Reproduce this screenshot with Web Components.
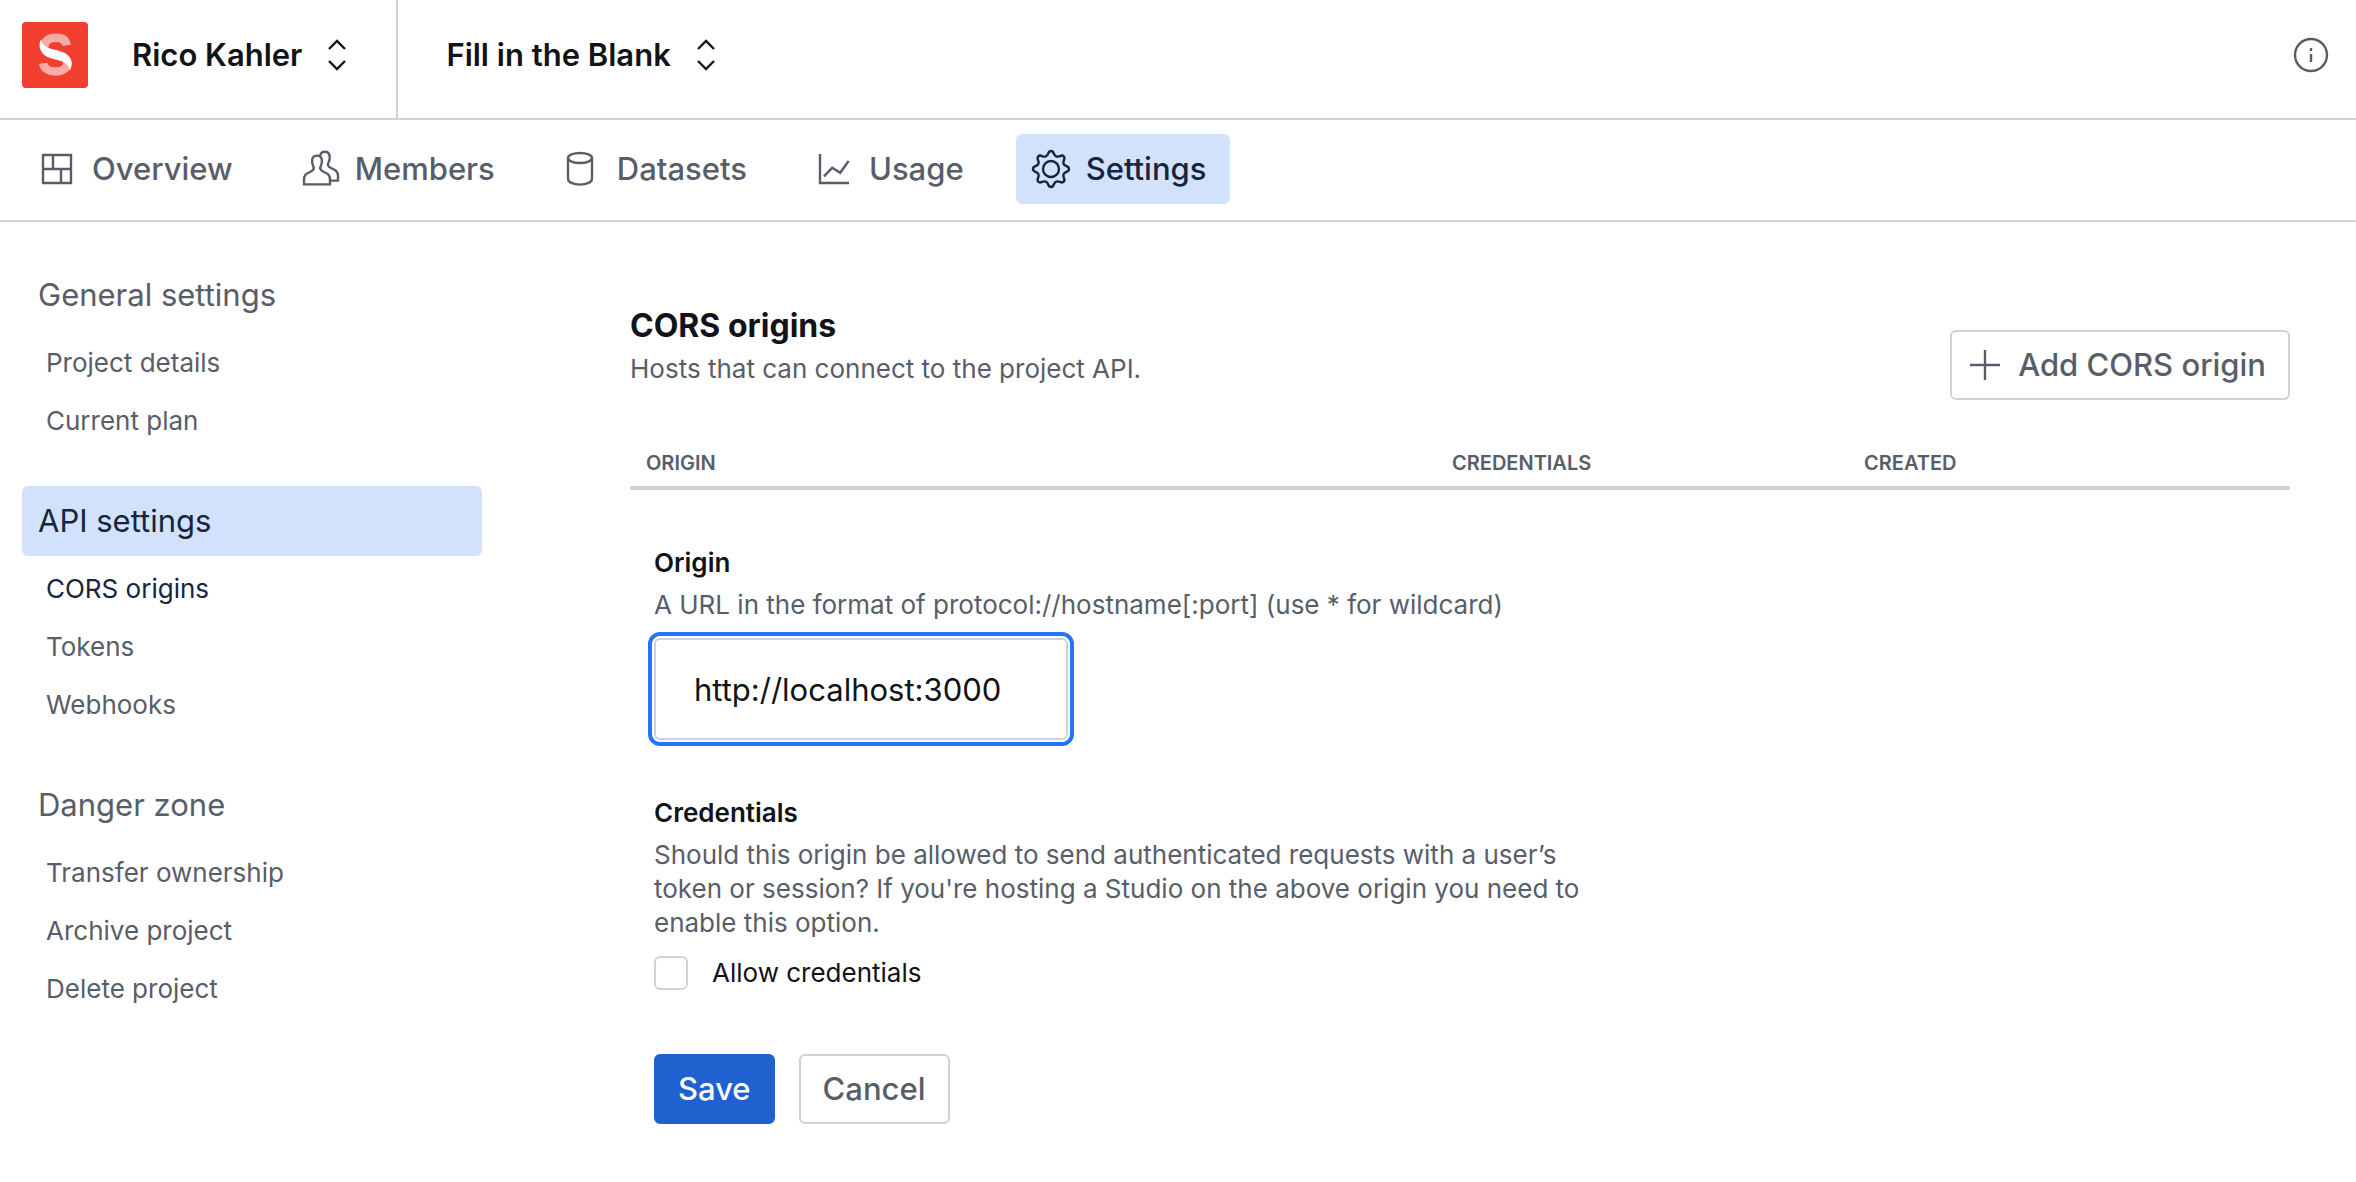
<!DOCTYPE html>
<html lang="en">
<head>
  <meta charset="utf-8">
  <meta name="viewport" content="width=device-width, initial-scale=1">
  <title>CORS origins - Fill in the Blank</title>
  <style>
    :root {
      --text-color: #121317;
      --muted-color: #575e69;
      --active-color: #15253f;
      --active-bg: #d3e2fc;
      --border-color: #ced3d9;
      --focus-color: #2276fc;
      --primary-color: #1f62cf;
      --brand-color: #f03e2f;
    }

    body {
      margin: 0;
      background-color: #fff;
      color: var(--text-color);
      font-family: Inter, "Liberation Sans", sans-serif;
      font-size: 31px;
      line-height: 40px;
    }
  </style>
</head>
<body>
  <settings-page></settings-page>

  <script>
    // wavy outline of the cog, one lobe every 45 degrees
    const cogPath = () => {
      const point = (angle, radius, shift) => {
        const x = 12.5 + radius * Math.cos(angle) - shift * Math.sin(angle)
        const y = 12.5 + radius * Math.sin(angle) + shift * Math.cos(angle)
        return `${x.toFixed(2)} ${y.toFixed(2)}`
      }
      let d = `M${point(0, 9, 0)}`

      for (let i = 1; i <= 16; i++) {
        const from = (i - 1) * Math.PI / 8
        const to = i * Math.PI / 8
        const [r1, r2] = i % 2 ? [9, 6.8] : [6.8, 9]
        d += `C${point(from, r1, 1.7)} ${point(to, r2, -1.7)} ${point(to, r2, 0)}`
      }
      return d + 'Z'
    }

    const icons = {
      select: '<path d="M8.5 9.5L12.5 5.5L16.5 9.5M8.5 15.5L12.5 19.5L16.5 15.5"/>',
      info: '<circle cx="12.5" cy="12.5" r="8"/><path d="M12.5 12V16M12.5 9V10.5"/>',
      dashboard: '<path d="M5.5 5.5H19.5V19.5H5.5ZM5.5 12.5H19.5M10.5 5.5V12.5M14.5 12.5V19.5"/>',
      users: '<g transform="translate(-1)"><path d="M5.5 20.2V18C5.5 15 7 14.8 8.8 13.9C10.2 13.2 10.8 12.6 10.2 11.3C9.5 10 9.4 9 9.6 7.8C9.8 6.5 10.8 5.8 12 5.8C13.2 5.8 14.2 6.5 14.4 7.8C14.6 9 14.5 10 13.8 11.3C13.2 12.6 13.8 13.2 15.2 13.9C17 14.8 18.5 15 18.5 18V20.2Z"/><path d="M13.5 6.1C13.8 4.6 14.7 3.9 15.9 3.9C17.1 3.9 18.1 4.6 18.3 5.9C18.5 7.2 18.4 8.2 17.7 9.4C17.1 10.6 17.6 11.3 19 12C21 13 22.5 13.5 22.5 16V18.3H18.6"/></g>',
      database: '<g transform="translate(-1)"><ellipse cx="12.5" cy="7" rx="6" ry="2.5"/><path d="M6.5 7V17.5C6.5 19 9 20.3 12.5 20.3C16 20.3 18.5 19 18.5 17.5V7"/></g>',
      chart: '<path d="M5.5 5V19.5H20M7.5 16.2L11.6 11.9L15.6 14.4L19.8 8.5"/>',
      cog: `<path d="${cogPath()}"/><circle cx="12.5" cy="12.5" r="4"/>`,
      add: '<path d="M12.5 5V20M5 12.5H20"/>'
    }

    class AppIcon extends HTMLElement {
      constructor() {
        super()

        this.attachShadow({ mode: 'open' })
      }

      connectedCallback() {
        this.shadowRoot.innerHTML = `
          <style>
            :host {
              display: block;
              flex: none;
              width: 50px;
              height: 50px;
            }

            svg {
              display: block;
              fill: none;
              stroke: currentColor;
              stroke-width: 1.2;
            }
          </style>
          <svg viewBox="0 0 25 25" width="50" height="50" aria-hidden="true">${icons[this.getAttribute('name')]}</svg>
        `
      }
    }

    class BrandLogo extends HTMLElement {
      constructor() {
        super()

        this.attachShadow({ mode: 'open' })

        this.shadowRoot.innerHTML = `
          <style>
            :host {
              display: block;
              flex: none;
            }

            a {
              display: block;
              width: 66px;
              height: 66px;
              border-radius: 4px;
              background-color: var(--brand-color);
            }
          </style>
          <a href="#" aria-label="Home">
            <svg viewBox="0 0 66 66" width="66" height="66" aria-hidden="true">
              <g fill="none" stroke="#f9aca5" stroke-width="8.5">
                <path d="M44.7 23.4C44 18 40 15.7 34 15.7C27 15.7 22.3 19 22.3 25"/>
                <path d="M21.3 41.2C22 47 27 49.5 33.5 49.5C41 49.5 45.5 46 45.5 40"/>
              </g>
              <path fill="#fff" d="M18.9 17.6C16 23 17.3 33 29 36.3C38 38.8 47 40 47.8 48.4C51.5 42 50.5 33 39 29.5C28 26.5 20.5 25.5 18.9 17.6Z"/>
            </svg>
          </a>
        `
      }
    }

    class ProjectSwitcher extends HTMLElement {
      constructor() {
        super()

        this.attachShadow({ mode: 'open' })

        this.shadowRoot.innerHTML = `
          <style>
            :host {
              display: block;
            }

            button {
              display: flex;
              align-items: center;
              gap: 10px;
              height: 66px;
              padding: 0 22px;
              border: none;
              background: none;
              color: inherit;
              font: inherit;
              font-weight: 600;
              white-space: nowrap;
              cursor: pointer;
            }
          </style>
          <button type="button"><slot></slot><app-icon name="select"></app-icon></button>
        `
      }
    }

    class PageHeader extends HTMLElement {
      constructor() {
        super()

        this.attachShadow({ mode: 'open' })

        this.shadowRoot.innerHTML = `
          <style>
            :host {
              display: block;
              border-bottom: 2px solid var(--border-color);
            }

            header {
              display: flex;
            }

            .section {
              display: flex;
              gap: 22px;
              padding: 22px 12px 30px 22px;
            }

            .section + .section {
              padding-left: 26px;
              border-left: 2px solid var(--border-color);
            }

            .info {
              height: 66px;
              margin: 22px 20px 30px auto;
              padding: 0;
              border: none;
              background: none;
              color: var(--muted-color);
              cursor: pointer;
            }
          </style>
          <header>
            <div class="section">
              <brand-logo></brand-logo>
              <project-switcher>Rico Kahler</project-switcher>
            </div>
            <div class="section">
              <project-switcher>Fill in the Blank</project-switcher>
            </div>
            <button class="info" type="button" aria-label="Help"><app-icon name="info"></app-icon></button>
          </header>
        `
      }
    }

    class NavTab extends HTMLElement {
      constructor() {
        super()

        this.attachShadow({ mode: 'open' })
      }

      connectedCallback() {
        this.shadowRoot.innerHTML = `
          <style>
            :host {
              display: block;
            }

            a {
              display: flex;
              align-items: center;
              gap: 10px;
              height: 70px;
              padding: 0 24px 0 10px;
              border-radius: 6px;
              color: var(--muted-color);
              font-weight: 500;
              text-decoration: none;
            }

            :host([active]) a {
              color: var(--active-color);
              background-color: var(--active-bg);
            }
          </style>
          <a href="#"><app-icon name="${this.getAttribute('icon')}"></app-icon><slot></slot></a>
        `
      }
    }

    class PageTabs extends HTMLElement {
      constructor() {
        super()

        this.attachShadow({ mode: 'open' })

        this.shadowRoot.innerHTML = `
          <style>
            :host {
              display: block;
              border-bottom: 2px solid var(--border-color);
            }

            nav {
              display: flex;
              gap: 28px;
              padding: 14px 22px 16px;
            }
          </style>
          <nav><slot></slot></nav>
        `
      }
    }

    class SideLink extends HTMLElement {
      constructor() {
        super()

        this.attachShadow({ mode: 'open' })

        this.shadowRoot.innerHTML = `
          <style>
            :host {
              display: block;
            }

            a {
              display: block;
              padding: 12px 24px;
              color: var(--muted-color);
              font-size: 26px;
              line-height: 34px;
              text-decoration: none;
            }

            :host([active]) a {
              color: var(--active-color);
            }
          </style>
          <a href="#"><slot></slot></a>
        `
      }
    }

    class SideGroup extends HTMLElement {
      constructor() {
        super()

        this.attachShadow({ mode: 'open' })
      }

      connectedCallback() {
        this.shadowRoot.innerHTML = `
          <style>
            :host {
              display: block;
            }

            .title {
              display: block;
              margin-bottom: 4px;
              padding: 15px 16px;
              border-radius: 6px;
              color: var(--muted-color);
              text-decoration: none;
            }

            :host([active]) .title {
              color: var(--active-color);
              background-color: var(--active-bg);
            }
          </style>
          <a class="title" href="#">${this.getAttribute('heading')}</a>
          <slot></slot>
        `
      }
    }

    class UiButton extends HTMLElement {
      constructor() {
        super()

        this.attachShadow({ mode: 'open' })
      }

      connectedCallback() {
        const icon = this.getAttribute('icon')

        this.shadowRoot.innerHTML = `
          <style>
            :host {
              display: block;
              flex: none;
            }

            button {
              display: flex;
              align-items: center;
              gap: 8px;
              height: 70px;
              padding: 0 22px;
              border: 2px solid var(--border-color);
              border-radius: 6px;
              background-color: #fff;
              color: var(--muted-color);
              font: inherit;
              font-weight: 500;
              cursor: pointer;
            }

            :host([icon]) button {
              padding-left: 8px;
            }

            :host([primary]) button {
              border-color: var(--primary-color);
              background-color: var(--primary-color);
              color: #fff;
            }
          </style>
          <button type="button">${icon ? `<app-icon name="${icon}"></app-icon>` : ''}<slot></slot></button>
        `
      }
    }

    class OriginsTable extends HTMLElement {
      constructor() {
        super()

        this.attachShadow({ mode: 'open' })

        this.shadowRoot.innerHTML = `
          <style>
            :host {
              display: block;
            }

            table {
              width: 100%;
              table-layout: fixed;
              border-collapse: collapse;
            }

            th {
              padding: 0 16px 10px;
              border-bottom: 4px solid var(--border-color);
              color: var(--muted-color);
              font-size: 20px;
              font-weight: 600;
              line-height: 26px;
              text-align: left;
              text-transform: uppercase;
            }

            .credentials {
              width: 380px;
            }

            .created {
              width: 410px;
            }
          </style>
          <table>
            <thead>
              <tr>
                <th>Origin</th>
                <th class="credentials">Credentials</th>
                <th class="created">Created</th>
              </tr>
            </thead>
          </table>
        `
      }
    }

    class OriginForm extends HTMLElement {
      constructor() {
        super()

        this.attachShadow({ mode: 'open' })

        this.shadowRoot.innerHTML = `
          <style>
            :host {
              display: block;
            }

            form {
              display: flex;
              flex-direction: column;
              align-items: flex-start;
              padding: 0 24px;
              font-size: 26px;
              line-height: 34px;
            }

            .title {
              margin: 0 0 8px;
              font-size: 26px;
              font-weight: 600;
            }

            .help {
              max-width: 930px;
              margin: 0 0 16px;
              color: var(--muted-color);
            }

            input[type="text"] {
              box-sizing: border-box;
              width: 414px;
              max-width: 100%;
              height: 102px;
              margin-bottom: 56px;
              padding: 0 38px;
              border: 2px solid var(--border-color);
              border-radius: 6px;
              outline: 4px solid var(--focus-color);
              outline-offset: 2px;
              background-color: #fff;
              color: inherit;
              font: inherit;
              font-size: 31px;
            }

            .check {
              display: flex;
              align-items: center;
              gap: 24px;
              margin-bottom: 64px;
            }

            input[type="checkbox"] {
              appearance: none;
              width: 34px;
              height: 34px;
              margin: 0;
              border: 2px solid var(--border-color);
              border-radius: 6px;
            }

            input[type="checkbox"]:checked {
              background-color: var(--primary-color);
            }

            .actions {
              display: flex;
              gap: 24px;
              font-size: 31px;
              line-height: 40px;
            }
          </style>
          <form>
            <label class="title" for="origin">Origin</label>
            <p class="help" id="origin-help">A URL in the format of protocol://hostname[:port] (use * for wildcard)</p>
            <input type="text" id="origin" value="http://localhost:3000" aria-describedby="origin-help">
            <h3 class="title">Credentials</h3>
            <p class="help" id="credentials-help">Should this origin be allowed to send authenticated requests with a user’s token or session? If you're hosting a Studio on the above origin you need to enable this option.</p>
            <div class="check">
              <input type="checkbox" id="allow" aria-describedby="credentials-help">
              <label for="allow">Allow credentials</label>
            </div>
            <div class="actions">
              <ui-button primary>Save</ui-button>
              <ui-button>Cancel</ui-button>
            </div>
          </form>
        `
      }
    }

    class SettingsPage extends HTMLElement {
      constructor() {
        super()

        this.attachShadow({ mode: 'open' })

        this.shadowRoot.innerHTML = `
          <style>
            :host {
              display: block;
            }

            .layout {
              display: flex;
              gap: 148px;
              padding: 38px 66px 38px 22px;
            }

            aside {
              display: flex;
              flex: none;
              flex-direction: column;
              gap: 36px;
              width: 460px;
            }

            main {
              flex: 1;
              min-width: 0;
              padding-top: 46px;
            }

            .heading {
              display: flex;
              align-items: flex-end;
              justify-content: space-between;
              margin-bottom: 50px;
            }

            h2 {
              margin: 0 0 6px;
              font-size: 32px;
              font-weight: 700;
            }

            .heading p {
              margin: 0 0 14px;
              color: var(--muted-color);
              font-size: 26px;
              line-height: 34px;
            }

            origins-table {
              margin-bottom: 56px;
            }
          </style>
          <page-header></page-header>
          <page-tabs>
            <nav-tab icon="dashboard">Overview</nav-tab>
            <nav-tab icon="users">Members</nav-tab>
            <nav-tab icon="database">Datasets</nav-tab>
            <nav-tab icon="chart">Usage</nav-tab>
            <nav-tab icon="cog" active>Settings</nav-tab>
          </page-tabs>
          <div class="layout">
            <aside>
              <side-group heading="General settings">
                <side-link>Project details</side-link>
                <side-link>Current plan</side-link>
              </side-group>
              <side-group heading="API settings" active>
                <side-link active>CORS origins</side-link>
                <side-link>Tokens</side-link>
                <side-link>Webhooks</side-link>
              </side-group>
              <side-group heading="Danger zone">
                <side-link>Transfer ownership</side-link>
                <side-link>Archive project</side-link>
                <side-link>Delete project</side-link>
              </side-group>
            </aside>
            <main>
              <div class="heading">
                <div>
                  <h2>CORS origins</h2>
                  <p>Hosts that can connect to the project API.</p>
                </div>
                <ui-button icon="add">Add CORS origin</ui-button>
              </div>
              <origins-table></origins-table>
              <origin-form></origin-form>
            </main>
          </div>
        `
      }
    }

    customElements.define('app-icon', AppIcon)
    customElements.define('brand-logo', BrandLogo)
    customElements.define('project-switcher', ProjectSwitcher)
    customElements.define('page-header', PageHeader)
    customElements.define('nav-tab', NavTab)
    customElements.define('page-tabs', PageTabs)
    customElements.define('side-link', SideLink)
    customElements.define('side-group', SideGroup)
    customElements.define('ui-button', UiButton)
    customElements.define('origins-table', OriginsTable)
    customElements.define('origin-form', OriginForm)
    customElements.define('settings-page', SettingsPage)
  </script>
</body>
</html>
